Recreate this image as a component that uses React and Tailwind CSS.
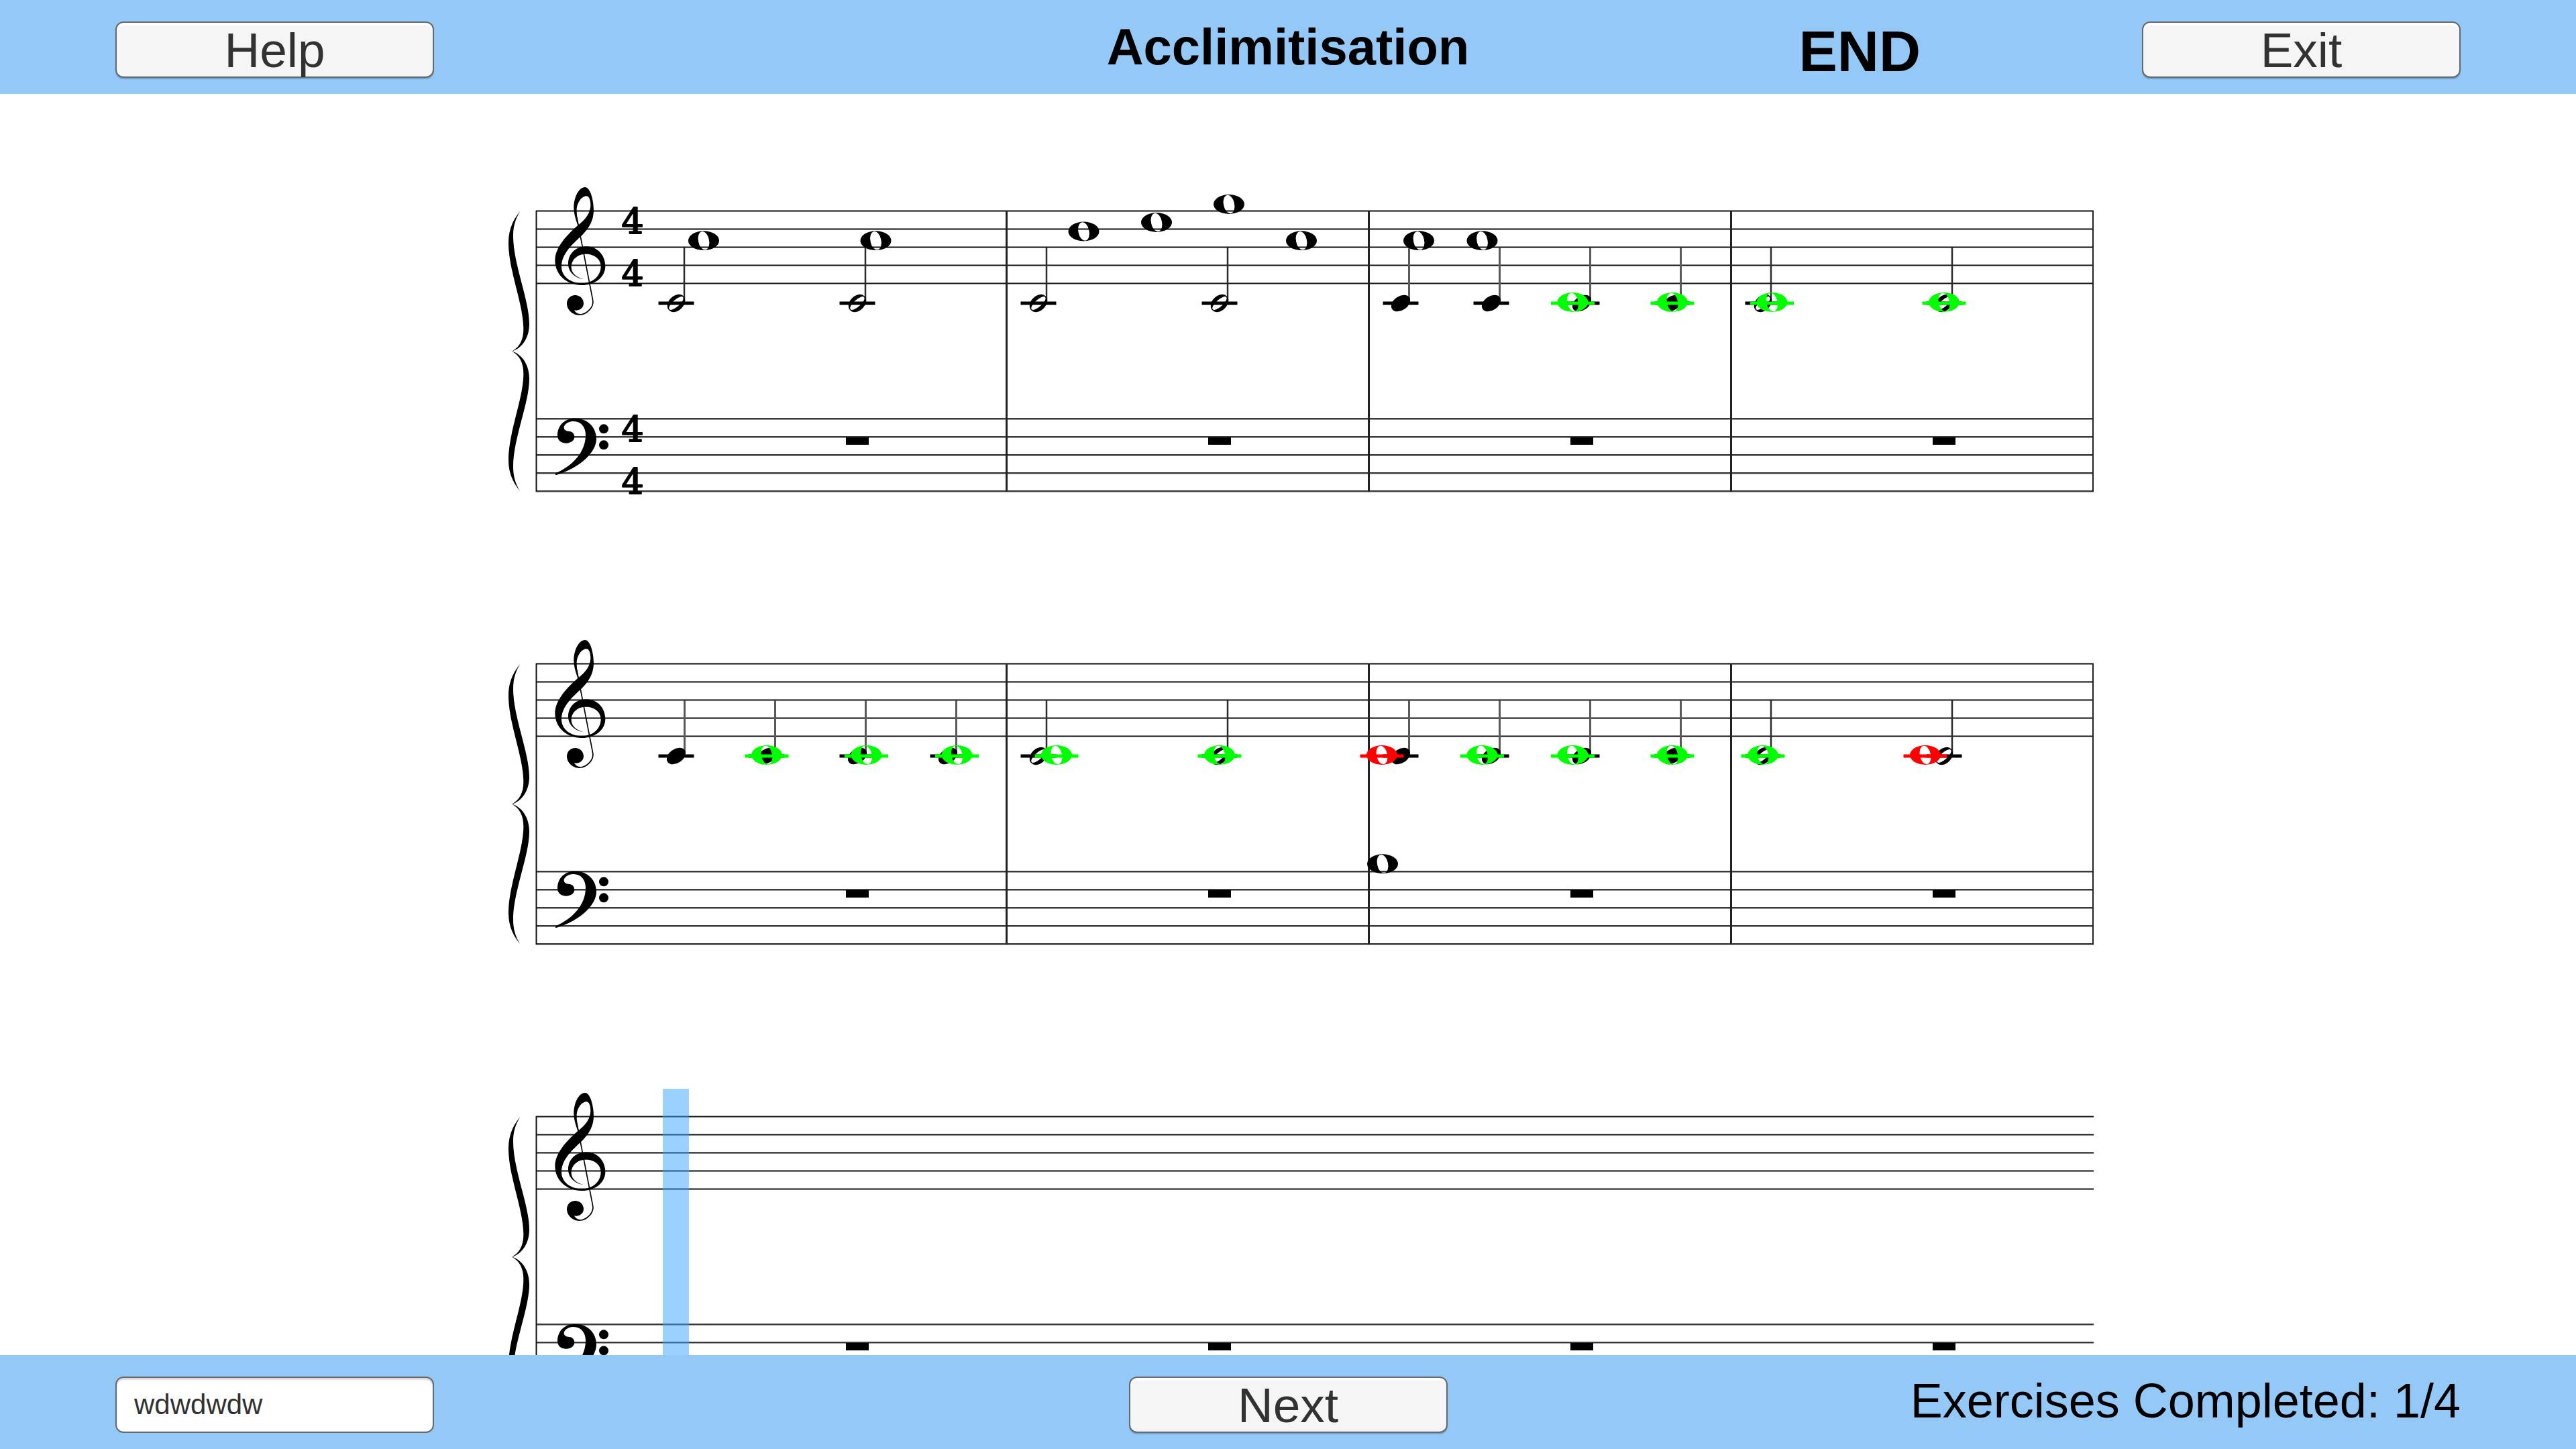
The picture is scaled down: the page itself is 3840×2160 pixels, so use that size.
const BAR_XS = [1500.5, 2040.5, 2580.5];
const REST_XS = [1278, 1818, 2358, 2898];
const LINES = [0, 1, 2, 3, 4];

const WHOLE =
  "M-23 0A23 14.4 0 1 1 23 0A23 14.4 0 1 1 -23 0ZM-7.8 1.7A8 13 -12 1 1 7.8 -1.7A8 13 -12 1 1 -7.8 1.7Z";
const HALF =
  "M-10.6 10.6A15 10.5 -45 1 1 10.6 -10.6A15 10.5 -45 1 1 -10.6 10.6ZM-10 9A13.5 4.6 -42 1 1 10 -9A13.5 4.6 -42 1 1 -10 9Z";

const GREEN = "#00ff00";
const RED = "#ff0000";

const SYSTEMS = [
  {
    time: true,
    bars: true,
    halves: [1008, 1278, 1548, 1818, 2628, 2898],
    quarters: [2088, 2223, 2358, 2493],
    wholes: [
      [1049, 358.7],
      [1305.5, 358.7],
      [1615.5, 345],
      [1724, 331.5],
      [1832, 304.5],
      [1940, 358.7],
      [2115, 358.7],
      [2209.5, 358.7],
    ],
    played: [
      [2344.5, GREEN],
      [2493, GREEN],
      [2641.5, GREEN],
      [2898, GREEN],
    ],
  },
  {
    bars: true,
    halves: [1548, 1818, 2628, 2898],
    quarters: [1008, 1143, 1278, 1413, 2088, 2223, 2358, 2493],
    wholes: [[2061, 612.7]],
    played: [
      [1143, GREEN],
      [1291.5, GREEN],
      [1426.5, GREEN],
      [1575, GREEN],
      [1818, GREEN],
      [2060, RED],
      [2209.5, GREEN],
      [2344.5, GREEN],
      [2493, GREEN],
      [2628, GREEN],
      [2870, RED],
    ],
  },
  { cursor: true, halves: [], quarters: [], wholes: [], played: [] },
];

function BraceHalf() {
  return (
    <path d="M106 165C70 208 54 252 54 305C54 430 121 580 121 690C121 740 104 772 68 792C120 775 147 725 147 668C147 560 75 400 75 275C75 235 84 200 106 165Z" />
  );
}

function Clefs() {
  return (
    <g transform="translate(740 260) scale(0.33333)">
      <BraceHalf />
      <g transform="translate(0 1582) scale(1 -1)">
        <BraceHalf />
      </g>
      <path
        fillRule="evenodd"
        d="M364 228C352 195 346 170 346 150C346 100 370 57 396 57C420 57 435 115 435 160C435 205 415 240 385 270C340 312 291 355 291 412C291 455 330 487 382 487C435 487 467 450 467 412C467 380 440 356 400 356C362 356 335 382 335 415C335 440 355 460 390 469C350 464 321 435 321 400C321 355 355 322 402 322C450 322 487 360 487 410C487 460 440 495 382 495C310 495 262 445 262 385C262 330 310 275 364 228ZM368 225C362 200 359 180 359 162C359 125 383 97 402 97C415 97 421 115 421 138C421 170 400 200 368 225Z"
      />
      <path
        d="M359 190L431 562C437 592 405 627 372 627"
        fill="none"
        stroke="#000"
        strokeWidth="5"
      />
      <path d="M352 540C373 540 390 556 390 577C390 594 376 607 358 608C350 609 348 606 348 606C352 616 362 623 374 624L372 630C344 631 315 607 315 577C315 556 332 540 352 540Z" />
      <path d="M273 1168C273 1122 305 1091 352 1091C408 1091 447 1130 447 1183C447 1240 380 1310 268 1344C262 1346 262 1338 268 1335C345 1300 399 1240 399 1165C399 1130 378 1104 345 1104C315 1104 302 1123 302 1132C302 1142 312 1149 325 1149C340 1149 349 1160 349 1174C349 1190 333 1202 312 1202C290 1202 273 1190 273 1168Z" />
      <circle cx="480" cy="1138" r="21" />
      <circle cx="480" cy="1210" r="21" />
    </g>
  );
}

function System({ time, bars, cursor, halves, quarters, wholes, played }) {
  return (
    <svg viewBox="0 140 3840 675" className="block w-full shrink-0" role="img" aria-label="Grand staff">
      <g strokeWidth="2">
        {LINES.map((i) => (
          <path key={i} d={`M799 ${314.5 + i * 27}H3121`} stroke="#111" />
        ))}
        {LINES.map((i) => (
          <path key={i} d={`M799 ${624.2 + i * 27}H3121`} stroke="#3a3a3a" strokeWidth="2.6" />
        ))}
        <path d="M799.5 314V733" stroke="#111" />
        {bars && (
          <>
            {BAR_XS.map((x) => (
              <path key={x} d={`M${x} 314V733`} stroke="#222" strokeWidth="3" />
            ))}
            <path d="M3120 314V733" stroke="#222" />
          </>
        )}
      </g>
      <Clefs />
      {time &&
        [348, 426, 658, 736].map((y) => (
          <text
            key={y}
            x="943"
            y={y}
            textAnchor="middle"
            stroke="#000"
            strokeWidth="2"
            strokeLinejoin="round"
            className="font-['DejaVu_Serif',serif] text-[52px]"
          >
            4
          </text>
        ))}
      {REST_XS.map((x) => (
        <rect key={x} x={x - 17} y="652" width="34" height="11" />
      ))}
      {halves.map((x) => (
        <g key={x} transform={`translate(${x} 452)`}>
          <path d="M12 -83V-3" stroke="#2a2a2a" strokeWidth="2.5" />
          <path d={HALF} fillRule="evenodd" />
          <rect x="-26.5" y="-2.5" width="53" height="5" />
        </g>
      ))}
      {quarters.map((x) => (
        <g key={x} transform={`translate(${x} 452)`}>
          <path d="M12.5 -83V-3" stroke="#5a5a5a" strokeWidth="3" />
          <ellipse rx="15.5" ry="10.5" transform="rotate(-35)" />
          <rect x="-26.5" y="-2.5" width="53" height="5" />
        </g>
      ))}
      {wholes.map(([x, y]) => (
        <path key={x} d={WHOLE} fillRule="evenodd" transform={`translate(${x} ${y})`} />
      ))}
      {played.map(([x, color]) => (
        <g key={x} fill={color} transform={`translate(${x} 450.5)`}>
          <path d={WHOLE} fillRule="evenodd" />
          <rect x="-32.5" y="-1" width="65" height="5" />
        </g>
      ))}
      {cursor && <rect x="988" y="273" width="39" height="540" fill="#37a1ff" fillOpacity="0.5" />}
    </svg>
  );
}

const BUTTON =
  "h-[84px] w-[475px] rounded-xl border-2 border-[#66696d] bg-[#f5f5f5] text-[73px] leading-none text-[#323232] shadow-[inset_0_4px_0_#ffffff,0_2px_1px_rgba(0,0,0,0.2)]";

export default function App() {
  return (
    <div className="flex h-screen flex-col bg-white font-['Liberation_Sans',Arial,sans-serif] text-black">
      <header className="grid h-[140px] shrink-0 grid-cols-[1fr_auto_1fr] items-center bg-[#94c8f7] px-[172px] pt-2">
        <div className="flex">
          <button type="button" className={BUTTON}>Help</button>
        </div>
        <h1 className="pb-2 text-[76px] leading-none font-bold">Acclimitisation</h1>
        <div className="flex items-center justify-end gap-[330px]">
          <p className="pt-1 text-[86px] leading-none font-bold">END</p>
          <button type="button" className={BUTTON}>Exit</button>
        </div>
      </header>

      <main className="flex min-h-0 flex-1 flex-col overflow-hidden">
        {SYSTEMS.map((system, i) => (
          <System key={i} {...system} />
        ))}
      </main>

      <footer className="grid h-[140px] shrink-0 grid-cols-[1fr_auto_1fr] items-center bg-[#94c8f7] px-[172px] pt-2">
        <div className="flex">
          <input
            type="text"
            aria-label="Player name"
            defaultValue="wdwdwdw"
            className="h-[84px] w-[475px] rounded-xl border-2 border-[#66696d] bg-white px-[26px] text-[42px] leading-none text-[#323232] shadow-[inset_0_3px_2px_rgba(0,0,0,0.15)]"
          />
        </div>
        <button type="button" className={BUTTON}>Next</button>
        <p className="pb-3 text-right text-[72px] leading-none">Exercises Completed: 1/4</p>
      </footer>
    </div>
  );
}
